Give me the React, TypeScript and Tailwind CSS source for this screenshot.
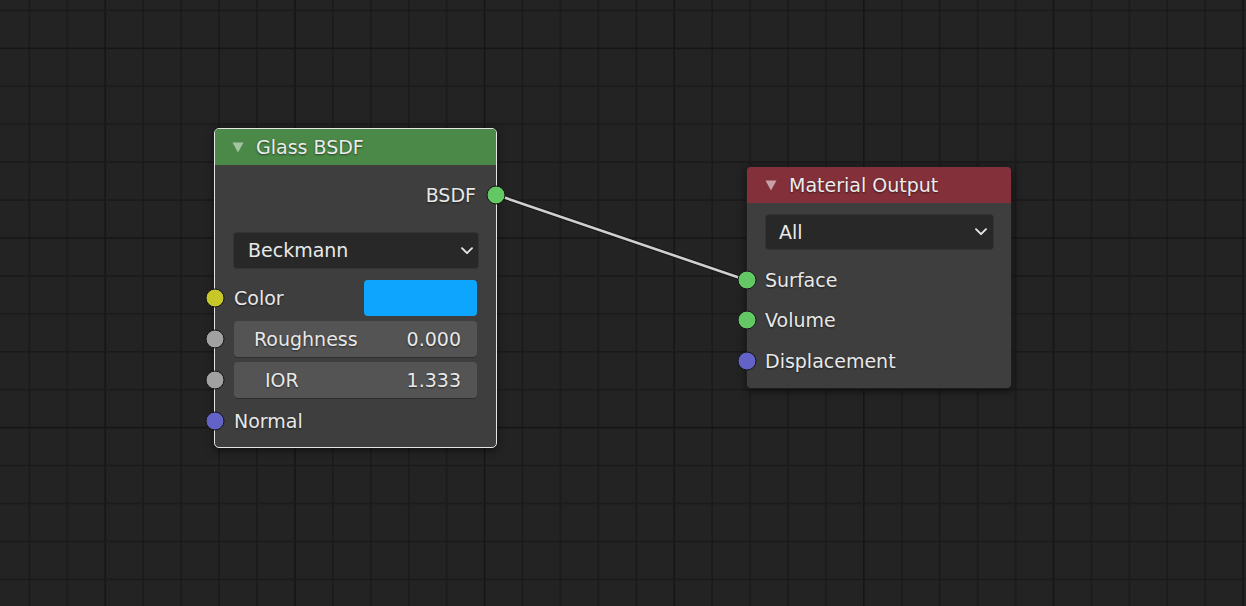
import React from 'react';

const STEP = 37.93;

const Grid = () => {
  const lines: React.ReactNode[] = [];
  for (let i = 0; i < 34; i++) {
    const x = 29.4 + i * STEP;
    const major = (i - 2) % 5 === 0;
    lines.push(
      <rect key={'v' + i} x={x - 0.75} y={0} width={1.5} height={606} fill={major ? '#161616' : '#1b1b1b'} />
    );
  }
  for (let j = 0; j < 17; j++) {
    const y = 10.4 + j * STEP;
    const major = (j - 1) % 5 === 0;
    lines.push(
      <rect key={'h' + j} x={0} y={y - 0.75} width={1246} height={1.5} fill={major ? '#161616' : '#1b1b1b'} />
    );
  }
  return (
    <svg className="absolute inset-0" width={1246} height={606}>
      {lines}
    </svg>
  );
};

const Socket = ({ color, side = 'left' }: { color: string; side?: 'left' | 'right' }) => (
  <span
    className={
      'absolute top-1/2 -translate-y-1/2 w-[19px] h-[19px] rounded-full border border-[#161616] z-10 ' +
      (side === 'left' ? 'left-0 -translate-x-1/2' : 'right-0 translate-x-1/2')
    }
    style={{ backgroundColor: color }}
  />
);

const Chevron = () => (
  <svg width="12" height="8" viewBox="0 0 12 8" className="shrink-0">
    <path d="M1 1.2 L6 6.2 L11 1.2" fill="none" stroke="#e6e6e6" strokeWidth="1.9" strokeLinecap="round" strokeLinejoin="round" />
  </svg>
);

const Triangle = ({ color }: { color: string }) => (
  <svg width="12" height="11" viewBox="0 0 12 11" className="shrink-0">
    <polygon points="0.5,0.5 11.5,0.5 6,10.5" fill={color} />
  </svg>
);

const shadow = '[text-shadow:0_1px_2px_rgba(0,0,0,0.55)]';

const App = () => {
  return (
    <div className="relative w-full h-[606px] overflow-hidden bg-[#232323] font-['DejaVu_Sans','Liberation_Sans',sans-serif] text-[19px] text-[#e8e8e8]">
      <Grid />

      {/* Link */}
      <svg className="absolute inset-0 pointer-events-none" width={1246} height={606}>
        <line x1={497} y1={195} x2={746} y2={280} stroke="#161616" strokeWidth={4.5} strokeLinecap="round" />
        <line x1={497} y1={195} x2={746} y2={280} stroke="#cfcfcf" strokeWidth={2.6} strokeLinecap="round" />
      </svg>

      {/* Glass BSDF node */}
      <div className="absolute left-[214px] top-[128px] w-[283px] flex flex-col rounded-[5px] border border-[#e4e4e4] bg-[#3e3e3e] shadow-[0_2px_8px_rgba(0,0,0,0.55)] pb-[8px]">
        <div className="h-[36px] flex items-center pl-[17px] gap-[12px] bg-[#4b8948] rounded-t-[4px]">
          <Triangle color="#a3c6a1" />
          <span className={'text-[#ececec] ' + shadow}>Glass BSDF</span>
        </div>

        <div className="relative mt-[12px] h-[36px] flex items-center justify-end pr-[20px]">
          <span className={shadow}>BSDF</span>
          <Socket color="#63c763" side="right" />
        </div>

        <div className="mt-[19px] ml-[18px] mr-[17px] h-[37px] flex items-center justify-between pl-[14px] pr-[5px] rounded-[4px] bg-[#282828] border border-[#343434]">
          <span>Beckmann</span>
          <Chevron />
        </div>

        <div className="relative mt-[11px] h-[36px] flex items-center justify-between pl-[19px] pr-[19px]">
          <span className={shadow}>Color</span>
          <div className="w-[113px] h-[36px] rounded-[4px] bg-[#0ea5fe]" />
          <Socket color="#c7c729" />
        </div>

        <div className="relative mt-[5px] h-[36px] px-[19px]">
          <div className="h-full flex items-center justify-between pl-[20px] pr-[16px] rounded-[4px] bg-[#545454] shadow-[0_1px_0_rgba(0,0,0,0.25)]">
            <span className={shadow}>Roughness</span>
            <span className={shadow}>0.000</span>
          </div>
          <Socket color="#a1a1a1" />
        </div>

        <div className="relative mt-[5px] h-[36px] px-[19px]">
          <div className="h-full flex items-center justify-between pl-[31px] pr-[16px] rounded-[4px] bg-[#545454] shadow-[0_1px_0_rgba(0,0,0,0.25)]">
            <span className={shadow}>IOR</span>
            <span className={shadow}>1.333</span>
          </div>
          <Socket color="#a1a1a1" />
        </div>

        <div className="relative mt-[5px] h-[36px] flex items-center pl-[19px]">
          <span className={shadow}>Normal</span>
          <Socket color="#6363c7" />
        </div>
      </div>

      {/* Material Output node */}
      <div className="absolute left-[746px] top-[166px] w-[266px] flex flex-col rounded-[5px] border border-[#1e1e1e] bg-[#3e3e3e] shadow-[0_2px_8px_rgba(0,0,0,0.55)] pb-[9px]">
        <div className="h-[36px] flex items-center pl-[18px] gap-[12px] bg-[#83303a] rounded-t-[4px]">
          <Triangle color="#c9a0a6" />
          <span className={'text-[#ececec] ' + shadow}>Material Output</span>
        </div>

        <div className="mt-[11px] ml-[18px] mr-[17px] h-[36px] flex items-center justify-between pl-[13px] pr-[6px] rounded-[4px] bg-[#282828] border border-[#343434]">
          <span>All</span>
          <Chevron />
        </div>

        <div className="relative mt-[12px] h-[36px] flex items-center pl-[18px]">
          <span className={shadow}>Surface</span>
          <Socket color="#63c763" />
        </div>
        <div className="relative mt-[4px] h-[36px] flex items-center pl-[18px]">
          <span className={shadow}>Volume</span>
          <Socket color="#63c763" />
        </div>
        <div className="relative mt-[5px] h-[36px] flex items-center pl-[18px]">
          <span className={shadow}>Displacement</span>
          <Socket color="#6363c7" />
        </div>
      </div>
    </div>
  );
};

export default App;
